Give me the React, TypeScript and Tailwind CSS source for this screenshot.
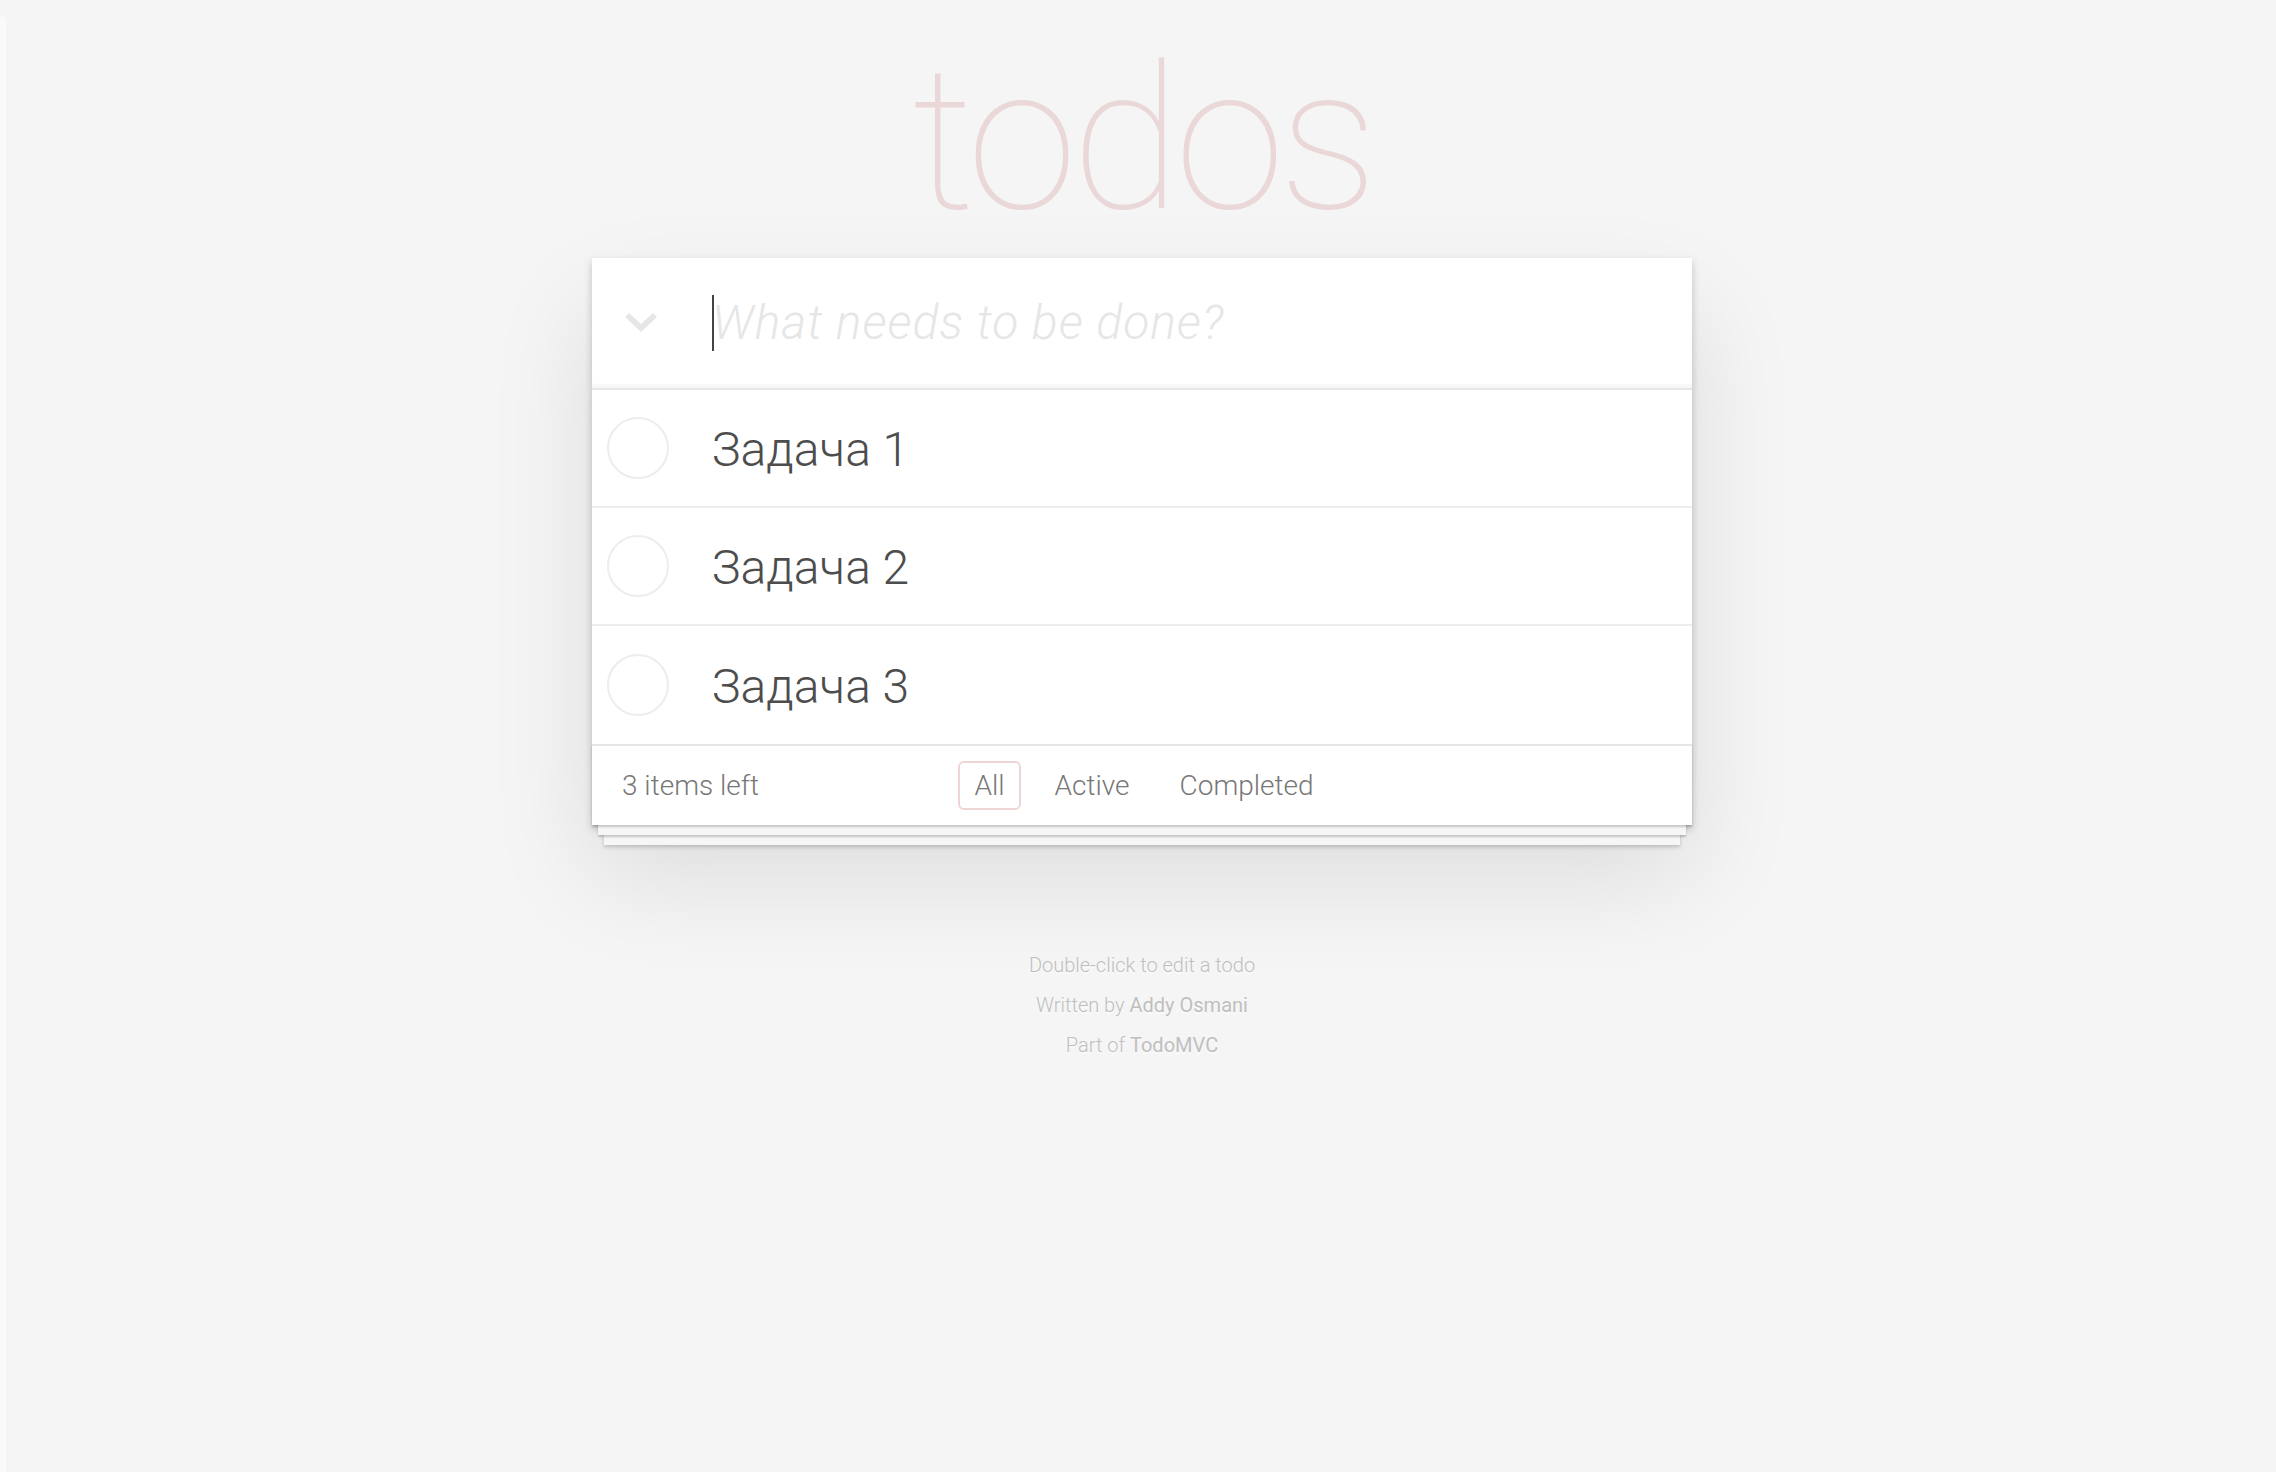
import React from "react";

const todos = ["Задача 1", "Задача 2", "Задача 3"];
const filters = ["All", "Active", "Completed"];

function ToggleAll() {
  return (
    <svg width="32" height="20" viewBox="0 0 32 20" className="block">
      <polygon points="0,4 4,0 16,11 28,0 32,4 16,19" fill="#e6e6e6" />
    </svg>
  );
}

export default function App() {
  return (
    <div
      className="min-h-screen flex bg-[#f5f5f5] text-[#4d4d4d]"
      style={{ fontFamily: "Roboto, 'Liberation Sans', sans-serif" }}
    >
      {/* window edge */}
      <div className="w-[6px] shrink-0 mt-[15px] rounded-tr-[6px] bg-[#fafafa]" />

      <div className="flex-1 pl-[2px] flex flex-col items-center">
        {/* Title */}
        <h1 className="mt-[40px] mb-[18px] text-[200px] leading-none font-thin tracking-[-6px] text-[rgba(175,47,47,0.15)] text-center">
          todos
        </h1>

        {/* App box */}
        <section className="w-[1100px] bg-white shadow-[0_4px_8px_0_rgba(0,0,0,0.2),0_50px_100px_0_rgba(0,0,0,0.1)]">
          <header className="h-[130px] flex items-center shadow-[inset_0_-4px_2px_rgba(0,0,0,0.03)]">
            <div className="w-[120px] shrink-0 pl-[33px] flex items-center">
              <ToggleAll />
            </div>
            <div className="relative flex-1 flex items-center">
              <input
                className="w-full bg-transparent outline-none caret-transparent text-[48px] italic font-light tracking-[1px] text-[#4d4d4d] placeholder:text-[#e6e6e6]"
                placeholder="What needs to be done?"
              />
              <span className="absolute left-0 top-1/2 -translate-y-1/2 w-[2px] h-[56px] bg-[#444]" />
            </div>
          </header>

          <ul className="border-t-2 border-[#e6e6e6]">
            {todos.map((t, i) => (
              <li
                key={t}
                className={`h-[118px] flex items-center ${i < todos.length - 1 ? "border-b-2 border-[#ededed]" : ""}`}
              >
                <div className="ml-[15px] w-[62px] h-[62px] rounded-full border-2 border-[#ededed] shrink-0" />
                <span className="ml-[43px] pt-[4px] text-[48px] font-light text-[#4d4d4d]">{t}</span>
              </li>
            ))}
          </ul>

          {/* Footer */}
          <footer className="h-[81px] px-[30px] border-t-2 border-[#e6e6e6] grid grid-cols-[1fr_auto_1fr] items-center text-[28px] font-light text-[#777] shadow-[0_2px_2px_rgba(0,0,0,0.2),0_16px_0_-6px_#f6f6f6,0_18px_2px_-6px_rgba(0,0,0,0.2),0_32px_0_-12px_#f6f6f6,0_34px_4px_-12px_rgba(0,0,0,0.2)]">
            <span>3 items left</span>
            <div className="flex items-center gap-[18px] pl-[4px]">
              {filters.map((f) => (
                <a
                  key={f}
                  className={`h-[49px] px-[14px] flex items-center rounded-[6px] border-2 ${f === "All" ? "border-[rgba(175,47,47,0.2)]" : "border-transparent"}`}
                >
                  {f}
                </a>
              ))}
            </div>
            <span />
          </footer>
        </section>

        {/* Info */}
        <div className="mt-[130px] flex flex-col items-center gap-[20px] text-[20px] leading-[20px] font-light text-[#bfbfbf] [text-shadow:0_2px_0_rgba(255,255,255,0.5)]">
          <p>Double-click to edit a todo</p>
          <p>
            Written by <a className="font-normal">Addy Osmani</a>
          </p>
          <p>
            Part of <a className="font-normal">TodoMVC</a>
          </p>
        </div>
      </div>
    </div>
  );
}
